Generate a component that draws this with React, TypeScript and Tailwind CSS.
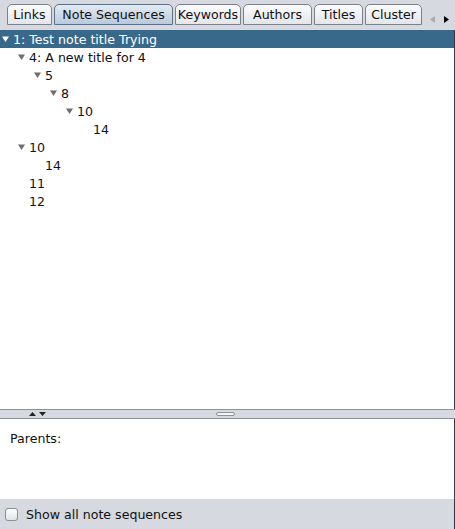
import React from "react";

const tabs = [
  { label: "Links", w: 45 },
  { label: "Note Sequences", w: 119, selected: true },
  { label: "Keywords", w: 66 },
  { label: "Authors", w: 69 },
  { label: "Titles", w: 49 },
  { label: "Cluster", w: 57 },
];

type Row = { level: number; text: string; expanded?: boolean; selected?: boolean };

const rows: Row[] = [
  { level: 0, text: "1: Test note title Trying", expanded: true, selected: true },
  { level: 1, text: "4: A new title for 4", expanded: true },
  { level: 2, text: "5", expanded: true },
  { level: 3, text: "8", expanded: true },
  { level: 4, text: "10", expanded: true },
  { level: 5, text: "14" },
  { level: 1, text: "10", expanded: true },
  { level: 2, text: "14" },
  { level: 1, text: "11" },
  { level: 1, text: "12" },
];

function Tri({ color }: { color: string }) {
  return (
    <svg width="7" height="6" viewBox="0 0 7 6" className="block">
      <path d="M0 0.5 L7 0.5 L3.5 6 Z" fill={color} />
    </svg>
  );
}

export default function App() {
  return (
    <div
      className="w-[455px] h-[529px] flex flex-col bg-[#d6d9df] text-[12.6px] text-[#111] overflow-hidden"
      style={{ fontFamily: '"DejaVu Sans", sans-serif' }}
    >
      {/* Tab bar */}
      <div className="h-[30px] flex items-start pt-[4px] pl-[7px] shrink-0">
        <div className="flex gap-[2px]">
          {tabs.map((t) => (
            <div
              key={t.label}
              style={{ width: t.w }}
              className={
                "h-[21px] flex items-center justify-center rounded-t-[5px] border leading-none " +
                (t.selected
                  ? "border-[#5f7187] bg-gradient-to-b from-[#e4ebf3] to-[#b9c9db]"
                  : "border-[#7c8088] bg-gradient-to-b from-[#fbfbfc] to-[#e4e6ea]")
              }
            >
              <span className="mt-[2px]">{t.label}</span>
            </div>
          ))}
        </div>
        <div className="flex items-center gap-[9px] ml-[8px] mt-[12px]">
          <svg width="5" height="7" viewBox="0 0 5 7" className="block">
            <path d="M5 0 L5 7 L0 3.5 Z" fill="#a8abb1" />
          </svg>
          <svg width="5" height="7" viewBox="0 0 5 7" className="block">
            <path d="M0 0 L0 7 L5 3.5 Z" fill="#000" />
          </svg>
        </div>
      </div>

      {/* Tree */}
      <div className="h-[379px] bg-white shrink-0 border-r border-[#20404f] flex flex-col">
        {rows.map((r, i) => (
          <div
            key={i}
            className={
              "h-[18px] flex items-center shrink-0 " +
              (r.selected ? "bg-[#39698a] text-white" : "")
            }
            style={{ paddingLeft: 2 + r.level * 16 }}
          >
            <div className="w-[11px] flex items-center">
              {r.expanded ? <Tri color={r.selected ? "#ffffff" : "#6e6e6e"} /> : null}
            </div>
            <span className="leading-none mt-[2px]">{r.text}</span>
          </div>
        ))}
      </div>

      {/* Divider */}
      <div className="h-[10px] shrink-0 border-y border-[#8d9198] bg-[#d6d9df] relative flex items-center">
        <div className="absolute left-[29px] top-[2px] flex gap-[3px]">
          <svg width="7" height="4" viewBox="0 0 7 4" className="block">
            <path d="M0 4 L7 4 L3.5 0 Z" fill="#222" />
          </svg>
          <svg width="7" height="4" viewBox="0 0 7 4" className="block">
            <path d="M0 0 L7 0 L3.5 4 Z" fill="#222" />
          </svg>
        </div>
        <div className="absolute left-[216px] top-[2px] w-[19px] h-[4px] rounded-[2px] border border-[#8f939a] bg-[#f4f5f7]" />
      </div>

      {/* Parents panel */}
      <div className="h-[80px] bg-white shrink-0 border-r border-[#20404f] pl-[10px] pt-[11px]">
        <span className="leading-none">Parents:</span>
      </div>

      {/* Bottom bar */}
      <div className="flex-1 flex items-center pl-[5px] gap-[8px] border-r border-[#20404f]">
        <div className="w-[13px] h-[13px] rounded-[3px] border border-[#8a8e96] bg-gradient-to-b from-[#fdfdfd] to-[#e2e4e8]" />
        <span className="leading-none mt-[2px]">Show all note sequences</span>
      </div>
    </div>
  );
}
